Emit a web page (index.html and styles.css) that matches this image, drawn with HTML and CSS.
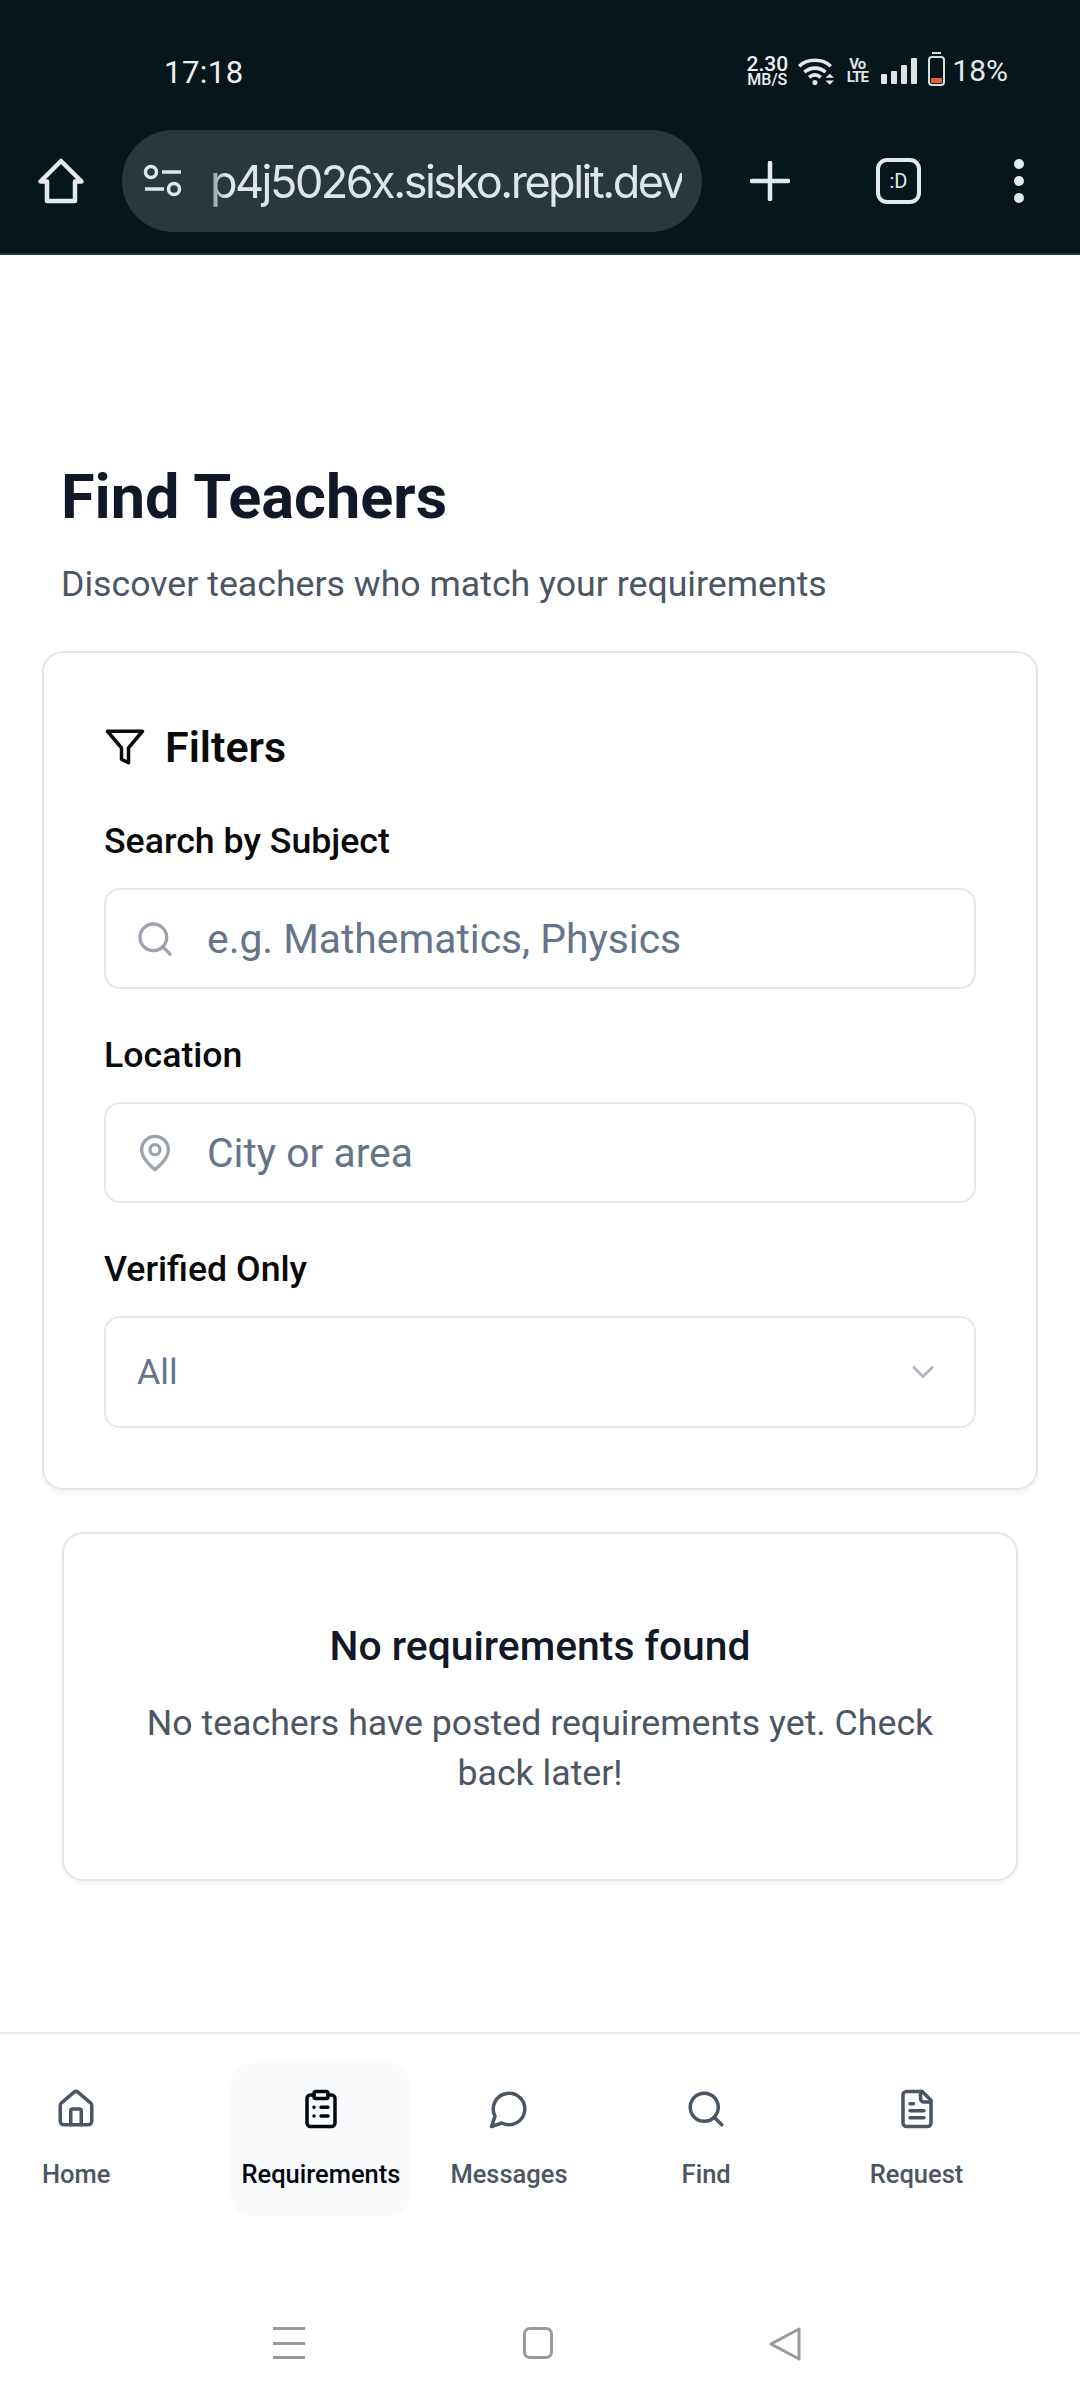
FILE: index.html
```html
<!DOCTYPE html>
<html>
<head>
	<meta charset="UTF-8">
	<title>Find Teachers</title>
	<link rel="stylesheet" href="styles.css">
</head>
<body>
	<div class="phone">
		<!-- browser chrome -->
		<header class="chrome">
			<div class="status-bar">
				<span class="clock">17:18</span>
				<div class="status-icons">
					<div class="speed"><span class="speed-value">2.30</span><span class="speed-unit">MB/S</span></div>
					<svg class="wifi" viewBox="0 0 36 28" fill="none" stroke="#e6e9ea" stroke-width="3.4">
						<path d="M2 9.5C10 2 24 2 32 9.5"/>
						<path d="M7 15c6-5 14-5 20 0"/>
						<path d="M11.500 20c3.500-3 7.500-3 11 0"/>
						<circle cx="17" cy="25" r="2.400" fill="#e6e9ea" stroke="none"/>
						<path d="M27 20.500h8l-4-4zM27 23h8l-4 4z" fill="#e6e9ea" stroke="none"/>
					</svg>
					<div class="volte"><span>Vo</span><span>LTE</span></div>
					<div class="signal"><i class="bar-1"></i><i class="bar-2"></i><i class="bar-3"></i><i class="bar-4"></i></div>
					<div class="battery"><i class="battery-level"></i></div>
					<span class="percent">18%</span>
				</div>
			</div>
			<div class="toolbar">
				<svg class="tool-home" viewBox="0 0 46 46" fill="none" stroke="#e3eaed" stroke-width="4.500" stroke-linejoin="round">
					<path d="M23 3 2.500 23.500H9V43h28V23.500h6.500z"/>
				</svg>
				<div class="url-pill">
					<svg class="tune" viewBox="0 0 40 34" fill="none" stroke="#dfe6e9" stroke-width="3.500">
						<circle cx="8" cy="8" r="5.500"/>
						<path d="M19 8h19M2 25h19"/>
						<circle cx="31" cy="25" r="5.500"/>
					</svg>
					<div class="url-text"><span>p4j5026x.sisko.replit.dev</span></div>
				</div>
				<svg class="tool-plus" viewBox="0 0 40 40" stroke="#e3eaed" stroke-width="4.500" stroke-linecap="round">
					<path d="M20 2v36M2 20h36"/>
				</svg>
				<div class="tab-box">:D</div>
				<div class="tool-menu"><i></i><i></i><i></i></div>
			</div>
		</header>

		<main class="content">
			<h1 class="page-title">Find Teachers</h1>
			<p class="page-sub">Discover teachers who match your requirements</p>

			<section class="card filters">
				<h2 class="filters-title">
					<svg class="filter-icon" viewBox="0 0 24 24" fill="none" stroke="currentColor" stroke-width="2" stroke-linecap="round" stroke-linejoin="round">
						<polygon points="22 3 2 3 10 12.460 10 19 14 21 14 12.460 22 3"/>
					</svg>
					Filters
				</h2>
				<label class="field-label">Search by Subject</label>
				<div class="input-box">
					<svg class="input-icon" viewBox="0 0 24 24" fill="none" stroke="currentColor" stroke-width="2" stroke-linecap="round" stroke-linejoin="round">
						<circle cx="11" cy="11" r="8"/>
						<path d="m21 21-4.300-4.300"/>
					</svg>
					<input type="text" placeholder="e.g. Mathematics, Physics">
				</div>
				<label class="field-label">Location</label>
				<div class="input-box">
					<svg class="input-icon" viewBox="0 0 24 24" fill="none" stroke="currentColor" stroke-width="2" stroke-linecap="round" stroke-linejoin="round">
						<path d="M20 10c0 6-8 12-8 12s-8-6-8-12a8 8 0 0 1 16 0Z"/>
						<circle cx="12" cy="10" r="3"/>
					</svg>
					<input type="text" placeholder="City or area">
				</div>
				<label class="field-label">Verified Only</label>
				<div class="select-box">
					<span>All</span>
					<svg class="select-arrow" viewBox="0 0 24 24" fill="none" stroke="currentColor" stroke-width="2" stroke-linecap="round" stroke-linejoin="round">
						<path d="m6 9 6 6 6-6"/>
					</svg>
				</div>
			</section>

			<section class="card empty">
				<h3 class="empty-title">No requirements found</h3>
				<p class="empty-text">No teachers have posted requirements yet. Check back later!</p>
			</section>
		</main>

		<nav class="bottom-nav">
			<a class="nav-item nav-home">
				<svg viewBox="0 0 24 24" fill="none" stroke="currentColor" stroke-width="2" stroke-linecap="round" stroke-linejoin="round">
					<path d="M15 21v-8a1 1 0 0 0-1-1h-4a1 1 0 0 0-1 1v8"/>
					<path d="M3 10a2 2 0 0 1 .709-1.528l7-6a2 2 0 0 1 2.582 0l7 6A2 2 0 0 1 21 10v9a2 2 0 0 1-2 2H5a2 2 0 0 1-2-2z"/>
				</svg>
				Home
			</a>
			<a class="nav-item nav-req active">
				<svg viewBox="0 0 24 24" fill="none" stroke="currentColor" stroke-width="2" stroke-linecap="round" stroke-linejoin="round">
					<rect x="8" y="2" width="8" height="4" rx="1"/>
					<path d="M16 4h2a2 2 0 0 1 2 2v14a2 2 0 0 1-2 2H6a2 2 0 0 1-2-2V6a2 2 0 0 1 2-2h2"/>
					<path d="M12 11h4M12 16h4M8 11h.01M8 16h.01"/>
				</svg>
				Requirements
			</a>
			<a class="nav-item nav-msg">
				<svg viewBox="0 0 24 24" fill="none" stroke="currentColor" stroke-width="2" stroke-linecap="round" stroke-linejoin="round">
					<path d="M7.900 20A9 9 0 1 0 4 16.100L2 22Z"/>
				</svg>
				Messages
			</a>
			<a class="nav-item nav-find">
				<svg viewBox="0 0 24 24" fill="none" stroke="currentColor" stroke-width="2" stroke-linecap="round" stroke-linejoin="round">
					<circle cx="11" cy="11" r="8"/>
					<path d="m21 21-4.300-4.300"/>
				</svg>
				Find
			</a>
			<a class="nav-item nav-request">
				<svg viewBox="0 0 24 24" fill="none" stroke="currentColor" stroke-width="2" stroke-linecap="round" stroke-linejoin="round">
					<path d="M15 2H6a2 2 0 0 0-2 2v16a2 2 0 0 0 2 2h12a2 2 0 0 0 2-2V7Z"/>
					<path d="M14 2v4a2 2 0 0 0 2 2h4"/>
					<path d="M10 9H8M16 13H8M16 17H8"/>
				</svg>
				Request
			</a>
		</nav>

		<div class="system-nav">
			<div class="sys-menu"><i></i><i></i><i></i></div>
			<div class="sys-home"></div>
			<svg class="sys-back" viewBox="0 0 34 34" fill="none" stroke="#999" stroke-width="3" stroke-linejoin="round">
				<path d="M31 2v30L3 17z"/>
			</svg>
		</div>
	</div>
</body>
</html>
```

FILE: styles.css
```css
* {
	box-sizing: border-box;
}
body {
	margin: 0;
	padding: 0;
	background-color: #fff;
	font-family: Roboto, "Noto Sans", sans-serif;
}
.phone {
	width: 1080px;
	height: 2400px;
	display: flex;
	flex-direction: column;
	overflow: hidden;
}

/* browser chrome */
.chrome {
	height: 255px;
	flex-shrink: 0;
	background-color: #07161b;
	border-bottom: 2px solid #2c3a3f;
	color: #eef1f2;
}
.status-bar {
	height: 130px;
	padding: 54px 72px 0 164px;
	display: flex;
	justify-content: space-between;
	align-items: flex-start;
}
.clock {
	font-size: 31px;
	line-height: 38px;
	letter-spacing: 0.5px;
}
.status-icons {
	display: flex;
	align-items: center;
	height: 36px;
	margin-top: -1px;
}
.speed {
	display: flex;
	flex-direction: column;
	align-items: center;
	width: 42px;
	font-weight: 500;
}
.speed-value {
	font-size: 21px;
	line-height: 17px;
}
.speed-unit {
	font-size: 16px;
	line-height: 13px;
}
.wifi {
	width: 38px;
	height: 30px;
	margin-left: 9px;
}
.volte {
	display: flex;
	flex-direction: column;
	align-items: center;
	width: 20px;
	margin-left: 12px;
	font-size: 15px;
	font-weight: 700;
	line-height: 13px;
	letter-spacing: -1px;
	color: #dfe3e4;
}
.signal {
	display: flex;
	align-items: flex-end;
	gap: 4px;
	height: 26px;
	margin-left: 14px;
}
.signal i {
	display: block;
	width: 6px;
	background-color: #e0e3e4;
	border-radius: 1px;
}
.bar-1 { height: 10px; }
.bar-2 { height: 13px; }
.bar-3 { height: 19px; }
.bar-4 { height: 26px; }
.battery {
	position: relative;
	width: 17px;
	height: 30px;
	margin-left: 11px;
	border: 2px solid #d8dcdd;
	border-radius: 4px;
}
.battery::before {
	content: "";
	position: absolute;
	top: -6px;
	left: 2px;
	width: 9px;
	height: 2px;
	background-color: #d8dcdd;
}
.battery-level {
	position: absolute;
	left: 1px;
	right: 1px;
	bottom: 1px;
	height: 5px;
	background-color: #e2603a;
}
.percent {
	margin-left: 7px;
	font-size: 30px;
	line-height: 36px;
	color: #e6e9ea;
}

.toolbar {
	height: 102px;
	display: flex;
	align-items: center;
	padding-left: 38px;
}
.tool-home {
	width: 46px;
	height: 46px;
	flex-shrink: 0;
}
.url-pill {
	width: 580px;
	height: 102px;
	margin-left: 38px;
	padding: 0 20px 0 21px;
	display: flex;
	align-items: center;
	background-color: #2a383d;
	border-radius: 51px;
}
.tune {
	width: 40px;
	height: 34px;
	flex-shrink: 0;
}
.url-text {
	flex: 1;
	margin-left: 9px;
	overflow: hidden;
	white-space: nowrap;
	font-family: Inter, sans-serif;
	font-size: 45px;
	letter-spacing: -2.5px;
	color: #dfe6e9;
	-webkit-mask-image: linear-gradient(to right, transparent 0, #000 34px);
	mask-image: linear-gradient(to right, transparent 0, #000 34px);
}
.url-text span {
	display: block;
	padding-left: 18px;
}
.tool-plus {
	width: 40px;
	height: 40px;
	margin-left: 48px;
	flex-shrink: 0;
}
.tab-box {
	width: 45px;
	height: 46px;
	margin-left: 86px;
	border: 4px solid #e3eaed;
	border-radius: 11px;
	text-align: center;
	font-size: 20px;
	line-height: 38px;
	color: #e3eaed;
	flex-shrink: 0;
}
.tool-menu {
	margin-left: 93px;
	display: flex;
	flex-direction: column;
	gap: 7px;
}
.tool-menu i {
	display: block;
	width: 10px;
	height: 10px;
	border-radius: 50%;
	background-color: #e3eaed;
}

/* page content */
.content {
	flex: 1;
	padding: 212px 42px 0;
}
.page-title {
	margin: 0 19px;
	font-size: 61.200px;
	line-height: 60px;
	font-weight: 700;
	color: #111827;
}
.page-sub {
	margin: 35px 19px 0;
	font-size: 35.700px;
	line-height: 44px;
	color: #4b5563;
}
.card {
	background-color: #fff;
	border: 2px solid #e2e6ec;
	border-radius: 21px;
	box-shadow: 0 3px 5px rgba(0, 0, 0, 0.05);
}
.filters {
	height: 839px;
	margin-top: 45px;
	padding: 62px 60px 0;
}
.filters-title {
	display: flex;
	align-items: center;
	gap: 19px;
	margin: 0 0 42px;
	font-size: 43px;
	line-height: 64px;
	font-weight: 600;
	color: #0a0a0a;
}
.filter-icon {
	width: 42px;
	height: 42px;
}
.field-label {
	display: block;
	margin-bottom: 27px;
	font-size: 35.700px;
	line-height: 40px;
	font-weight: 500;
	color: #0a0a0a;
}
.input-box {
	display: flex;
	align-items: center;
	height: 101px;
	margin-bottom: 46px;
	padding-left: 29px;
	border: 2px solid #e2e6ec;
	border-radius: 16px;
}
.input-icon {
	width: 40px;
	height: 40px;
	color: #9ca3af;
	flex-shrink: 0;
}
.input-box input {
	flex: 1;
	min-width: 0;
	margin-left: 32px;
	padding: 0;
	border: none;
	outline: none;
	background: none;
	font-family: inherit;
	font-size: 40.800px;
}
.input-box input::placeholder {
	color: #64748b;
	opacity: 1;
}
.select-box {
	display: flex;
	align-items: center;
	justify-content: space-between;
	height: 112px;
	padding: 0 33px 0 31px;
	border: 2px solid #e2e6ec;
	border-radius: 16px;
	font-size: 35.700px;
	color: #64748b;
}
.select-arrow {
	width: 36px;
	height: 36px;
	color: #64748b;
	opacity: 0.5;
}
.empty {
	height: 349px;
	margin: 42px 20px 0;
	padding: 86px 60px 0;
	text-align: center;
}
.empty-title {
	margin: 0;
	font-size: 40.800px;
	line-height: 52px;
	font-weight: 500;
	color: #111827;
}
.empty-text {
	margin: 26px 0 0;
	font-size: 35.700px;
	line-height: 50px;
	color: #4b5563;
}

/* bottom tabs */
.bottom-nav {
	height: 245px;
	flex-shrink: 0;
	padding-top: 29px;
	display: flex;
	align-items: flex-start;
	border-top: 2px solid #e5e7eb;
	background-color: #fff;
}
.nav-item {
	display: flex;
	flex-direction: column;
	align-items: center;
	height: 153px;
	padding: 25px 10px 0;
	border-radius: 21px;
	font-size: 25.500px;
	line-height: 34px;
	font-weight: 500;
	color: #4b5563;
}
.nav-item svg {
	width: 42px;
	height: 42px;
	margin-bottom: 27px;
}
.nav-item.active {
	background-color: #f9fafb;
	color: #030712;
}
.nav-home { margin-left: 32px; }
.nav-req { margin-left: 111px; }
.nav-msg { margin-left: 30px; }
.nav-find { margin-left: 94px; }
.nav-request { margin-left: 119px; }

/* android buttons */
.system-nav {
	height: 123px;
	flex-shrink: 0;
	display: flex;
	align-items: flex-start;
	padding: 50px 0 0 273px;
}
.sys-menu {
	width: 32px;
	height: 32px;
	display: flex;
	flex-direction: column;
	justify-content: space-between;
}
.sys-menu i {
	display: block;
	height: 3px;
	background-color: #999;
}
.sys-home {
	width: 30px;
	height: 32px;
	margin-left: 218px;
	border: 3px solid #999;
	border-radius: 7px;
}
.sys-back {
	width: 34px;
	height: 34px;
	margin-left: 215px;
}
```
